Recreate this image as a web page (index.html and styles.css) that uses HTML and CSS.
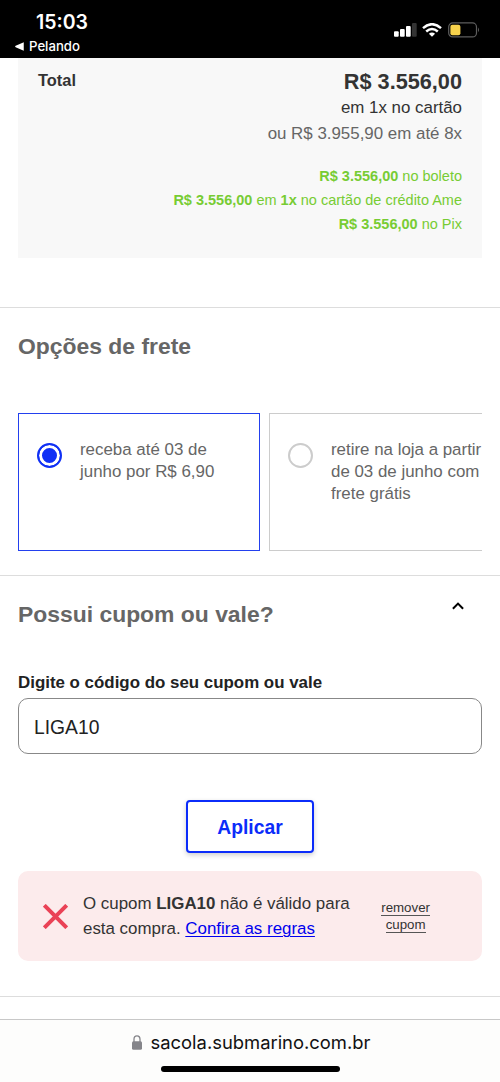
FILE: index.html
```html
<!DOCTYPE html>
<html lang="pt-BR">
<head>
<meta charset="utf-8">
<title>Sacola - Submarino</title>
<link rel="stylesheet" href="styles.css">
</head>
<body>
<header class="status">
  <div class="status-left">
    <div class="time">15:03</div>
    <div class="back"><svg width="9" height="9" viewBox="0 0 8 8"><path d="M7.8.2v7.6L.6 4.6q-1-.6 0-1.2z" fill="#fff"/></svg><span>Pelando</span></div>
  </div>
  <div class="status-icons">
    <svg width="23" height="14" viewBox="0 0 23 14"><g fill="#fff"><rect x="0" y="8.3" width="4.7" height="5.4" rx="1"/><rect x="6" y="6" width="4.7" height="7.7" rx="1"/><rect x="12" y="3" width="4.7" height="10.7" rx="1"/></g><rect x="18" y="0" width="4.7" height="13.7" rx="1" fill="#333"/></svg>
    <svg class="wifi" width="20" height="14" viewBox="0 0 20 14"><g fill="none" stroke="#fff" stroke-width="2.5"><path d="M1 5.1Q10-2.7 19 5.1"/><path d="M4.2 8.5Q10 3.5 15.8 8.5"/></g><path d="M6.9 10.7Q10 8.2 13.1 10.7L10 13.8z" fill="#fff"/></svg>
    <svg class="battery" width="32" height="16" viewBox="0 0 32 16"><rect x=".7" y=".9" width="27.8" height="14" rx="4" fill="none" stroke="#5d5d5d" stroke-width="1.2"/><rect x="2.4" y="2.7" width="10" height="10.5" rx="2" fill="#f8d34c"/><path d="M30 5.5q2 2.4 0 4.8z" fill="#5d5d5d"/></svg>
  </div>
</header>
<main class="page">
  <section class="summary">
    <div class="total-label">Total</div>
    <div class="prices">
      <div class="price">R$ 3.556,00</div>
      <div class="once">em 1x no cartão</div>
      <div class="installments">ou R$ 3.955,90 em até 8x</div>
      <div class="offers">
        <div><b>R$ 3.556,00</b> no boleto</div>
        <div><b>R$ 3.556,00</b> em <b>1x</b> no cartão de crédito Ame</div>
        <div><b>R$ 3.556,00</b> no Pix</div>
      </div>
    </div>
  </section>
  <section class="shipping">
    <h2>Opções de frete</h2>
    <div class="options">
      <div class="option selected"><span class="radio"></span><p>receba até 03 de<br>junho por R$ 6,90</p></div>
      <div class="option"><span class="radio"></span><p>retire na loja a partir<br>de 03 de junho com<br>frete grátis</p></div>
    </div>
  </section>
  <section class="coupon">
    <div class="coupon-head">
      <h2>Possui cupom ou vale?</h2>
      <svg width="12" height="8" viewBox="0 0 12 8"><path d="M.9 6.8 6 1.6l5.1 5.2" fill="none" stroke="#000" stroke-width="2"/></svg>
    </div>
    <label class="field-label" for="code">Digite o código do seu cupom ou vale</label>
    <input class="field" id="code" value="LIGA10">
    <button class="apply">Aplicar</button>
    <div class="alert">
      <svg class="cross" width="25" height="25" viewBox="0 0 25 25"><path d="M1.3 1.3l22.4 22.4M23.7 1.3 1.3 23.7" stroke="#ea4256" stroke-width="4"/></svg>
      <p class="message">O cupom <b>LIGA10</b> não é válido para<br>esta compra. <a href="#">Confira as regras</a></p>
      <div class="remove"><span>remover</span><span>cupom</span></div>
    </div>
  </section>
  <div class="next"></div>
</main>
<footer class="browser">
  <div class="address"><svg width="10" height="15" viewBox="0 0 10 15"><path d="M2 7V4.2a3 3.4 0 0 1 6 0V7" fill="none" stroke="#85858a" stroke-width="1.3"/><rect y="6.3" width="10" height="8.5" rx="1.5" fill="#85858a"/></svg><span>sacola.submarino.com.br</span></div>
  <div class="home"></div>
</footer>
</body>
</html>
```
FILE: styles.css
```css
* { box-sizing: border-box; }
body { margin: 0; width: 500px; height: 1082px; overflow: hidden; display: flex; flex-direction: column; background: #fff; color: #333; font-family: "Liberation Sans", Arial, sans-serif; font-size: 16.9px; }
h2, p { margin: 0; }
svg { display: block; flex: none; }
.status { height: 58px; flex: none; background: #000; color: #fff; display: flex; justify-content: space-between; font-family: Inter, sans-serif; }
.status-left { padding: 10px 0 0 15px; }
.time { padding-left: 21px; font-size: 19.5px; line-height: 24px; font-weight: 600; }
.back { display: flex; align-items: center; gap: 5px; font-size: 13.2px; line-height: 16px; font-weight: 500; padding-top: 4px; }
.status-icons { display: flex; align-items: flex-start; padding: 23px 20px 0 0; }
.wifi { margin-left: 5px; }
.battery { margin: -1px 0 0 6px; }
.page { height: 961px; flex: none; overflow: hidden; }
.summary { height: 200px; margin: 0 18px; padding: 10px 20px 0; background: #f8f8f8; display: flex; justify-content: space-between; }
.total-label { font-size: 16.4px; line-height: 24px; font-weight: 700; }
.prices { text-align: right; }
.price { font-size: 21.7px; line-height: 28px; font-weight: 700; }
.once { line-height: 23px; }
.installments { line-height: 29px; color: #666; }
.offers { padding-top: 16px; font-size: 14.5px; line-height: 24.2px; color: #7c3; }
.shipping { margin-top: 49px; height: 268px; border-top: 1px solid #ddd; padding: 24px 18px 0; }
h2 { font-size: 22.9px; line-height: 28px; color: #666; font-weight: 700; }
.options { margin-top: 53px; display: flex; gap: 9px; overflow: hidden; }
.option { width: 242px; height: 138px; flex: none; border: 1px solid #ccc; padding: 25px 0 0 18px; display: flex; gap: 18px; color: #666; }
.option p { line-height: 21.8px; white-space: nowrap; }
.selected { border-color: #2340ee; }
.radio { width: 25px; height: 25px; margin-top: 4px; flex: none; border: 2px solid #ccc; border-radius: 50%; }
.selected .radio { border-color: #1030f5; background: #1030f5; box-shadow: inset 0 0 0 3px #fff; }
.coupon { height: 421px; border-top: 1px solid #ddd; padding: 24px 18px 0; display: flex; flex-direction: column; }
.coupon-head { display: flex; justify-content: space-between; padding-right: 18px; }
.coupon-head svg { margin-top: 2px; }
.field-label { margin-top: 43px; line-height: 24px; font-weight: 700; color: #222; }
.field { width: 464px; height: 56px; flex: none; margin: 3px 0 0; border: 1px solid #888; border-radius: 10px; padding: 4px 15px 0; color: #222; background: #fff; font: 19.3px "Liberation Sans", Arial, sans-serif; }
.apply { align-self: center; width: 128px; height: 53px; flex: none; margin: 46px 0 0; padding: 2px 0 0; border: 2px solid #0b2cfa; border-radius: 4px; background: #fff; color: #0b2cfa; font: 700 19.3px "Liberation Sans", Arial, sans-serif; box-shadow: 0 2px 5px rgba(0,0,0,.2); }
.alert { height: 90px; flex: none; margin-top: 18px; border-radius: 10px; background: #fcebec; padding: 20px 52px 0 25px; display: flex; }
.cross { margin-top: 13px; }
.message { margin-left: 15px; line-height: 25.3px; white-space: nowrap; }
.message a { color: #00e; text-underline-offset: 2px; text-decoration-thickness: 1px; }
.remove { margin: 10px 0 0 auto; display: flex; flex-direction: column; align-items: center; gap: 2px; font-size: 13.3px; line-height: 15px; }
.remove span { border-bottom: 1px solid #555; line-height: 14px; }
.next { height: 24px; border-top: 1px solid #ddd; }
.browser { height: 63px; flex: none; border-top: 1px solid #c8c8c8; background: #fdfdfc; display: flex; flex-direction: column; align-items: center; }
.address { margin: 9px 0 0 2px; display: flex; align-items: center; gap: 9px; font: 18.4px/26px Inter, sans-serif; color: #111; }
.home { width: 179px; height: 6px; margin-top: 11px; border-radius: 3px; background: #000; }
```
